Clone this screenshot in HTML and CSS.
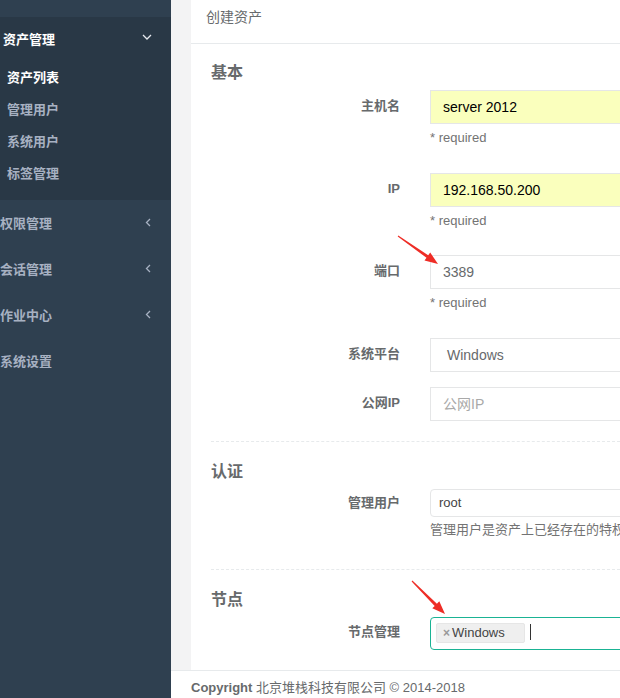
FILE: index.html
```html
<!DOCTYPE html>
<html lang="zh-CN">
<head>
<meta charset="utf-8">
<title>创建资产</title>
<link rel="stylesheet" href="styles.css">
</head>
<body>
<div class="layout">
  <nav class="sidebar">
    <div class="nav-top"></div>
    <div class="nav-active">
      <div class="nav-link nav-link-open">
        <span>资产管理</span>
        <svg class="chev chev-down" width="10" height="6" viewBox="0 0 10 6"><polyline points="1,1 5,5 9,1" fill="none" stroke="#e6e9ee" stroke-width="1.3"/></svg>
      </div>
      <ul class="subnav">
        <li class="current">资产列表</li>
        <li>管理用户</li>
        <li>系统用户</li>
        <li>标签管理</li>
      </ul>
    </div>
    <div class="nav-link">
      <span>权限管理</span>
      <svg class="chev chev-left" width="6" height="9" viewBox="0 0 6 9"><polyline points="5,1 1.5,4.5 5,8" fill="none" stroke="#a7b1c2" stroke-width="1.3"/></svg>
    </div>
    <div class="nav-link">
      <span>会话管理</span>
      <svg class="chev chev-left" width="6" height="9" viewBox="0 0 6 9"><polyline points="5,1 1.5,4.5 5,8" fill="none" stroke="#a7b1c2" stroke-width="1.3"/></svg>
    </div>
    <div class="nav-link">
      <span>作业中心</span>
      <svg class="chev chev-left" width="6" height="9" viewBox="0 0 6 9"><polyline points="5,1 1.5,4.5 5,8" fill="none" stroke="#a7b1c2" stroke-width="1.3"/></svg>
    </div>
    <div class="nav-link">
      <span>系统设置</span>
    </div>
  </nav>

  <div class="main">
    <div class="content">
      <div class="card">
        <div class="card-header">创建资产</div>
        <div class="card-body">
          <h3 class="section-title first">基本</h3>
          <div class="form-group">
            <div class="label">主机名</div>
            <div class="field">
              <div class="input autofill">server 2012</div>
              <div class="help">* required</div>
            </div>
          </div>
          <div class="form-group">
            <div class="label">IP</div>
            <div class="field">
              <div class="input autofill">192.168.50.200</div>
              <div class="help">* required</div>
            </div>
          </div>
          <div class="form-group">
            <div class="label">端口</div>
            <div class="field">
              <div class="input muted">3389</div>
              <div class="help">* required</div>
            </div>
          </div>
          <div class="form-group">
            <div class="label">系统平台</div>
            <div class="field">
              <div class="input select muted">Windows</div>
            </div>
          </div>
          <div class="form-group">
            <div class="label">公网IP</div>
            <div class="field">
              <div class="input placeholder">公网IP</div>
            </div>
          </div>

          <div class="hr-dashed"></div>

          <h3 class="section-title">认证</h3>
          <div class="form-group">
            <div class="label label-small">管理用户</div>
            <div class="field">
              <div class="select2">root</div>
              <div class="help help-long">管理用户是资产上已经存在的特权用户，用于推送系统用户</div>
            </div>
          </div>

          <div class="hr-dashed"></div>

          <h3 class="section-title">节点</h3>
          <div class="form-group">
            <div class="label label-multi">节点管理</div>
            <div class="field">
              <div class="select2-multi">
                <span class="tag"><span class="tag-x">×</span>Windows</span>
                <span class="caret"></span>
              </div>
            </div>
          </div>
        </div>
      </div>
    </div>
    <footer class="footer"><strong>Copyright</strong> 北京堆栈科技有限公司 © 2014-2018</footer>
  </div>
</div>

<svg class="annotations" width="620" height="698" viewBox="0 0 620 698">
  <polygon points="397.7,236.4 426.5,257.8 424.5,260.6 438,264 430.2,252.5 428.2,255.3 398.3,235.6" fill="#ee2d26"/>
  <polygon points="411.6,581.4 434.7,605.9 432.3,608.3 445,614 439.3,601.3 436.9,603.7 412.4,580.6" fill="#ee2d26"/>
</svg>
</body>
</html>
```

FILE: styles.css
```css
* { box-sizing: border-box; }

html, body {
  margin: 0;
  padding: 0;
  width: 620px;
  height: 698px;
  overflow: hidden;
}

body {
  font-family: "Liberation Sans", Arial, "Noto Sans CJK SC", sans-serif;
  font-size: 13px;
  color: #676a6c;
  background: #f3f3f4;
  position: relative;
}

.layout {
  display: flex;
  height: 698px;
}

/* Sidebar */
.sidebar {
  width: 171px;
  flex: 0 0 171px;
  background: #2f4050;
  font-family: "Noto Sans CJK SC", "Liberation Sans", sans-serif;
  font-weight: 700;
  font-size: 13px;
}

.nav-top {
  height: 17px;
}

.nav-active {
  background: #293846;
  padding-bottom: 11px;
}

.nav-link {
  display: flex;
  justify-content: space-between;
  align-items: center;
  height: 46px;
  line-height: 18px;
  padding: 0 19px 0 0;
  color: #a7b1c2;
}

.nav-link-open {
  height: 44px;
  padding-left: 3px;
  padding-top: 0;
  color: #ffffff;
}

.nav-link-open span {
  margin-top: 0;
}

.chev-down {
  margin-top: -4px;
  margin-right: 0;
}

.chev-left {
  margin-top: -2px;
  margin-right: 1px;
}

.subnav {
  list-style: none;
  margin: 0;
  padding: 0;
}

.subnav li {
  height: 32px;
  line-height: 18px;
  padding: 7px 0 7px 7px;
  color: #a7b1c2;
}

.subnav li.current {
  color: #ffffff;
}

/* Main */
.main {
  flex: 1;
  display: flex;
  flex-direction: column;
  min-width: 0;
}

.content {
  flex: 1;
  padding-left: 20px;
  overflow: hidden;
  min-height: 0;
}

.card {
  background: #ffffff;
  height: 100%;
  overflow: hidden;
}

.card-header {
  height: 44px;
  border-bottom: 1px solid #e7eaec;
  padding: 6px 0 0 15px;
  line-height: 20px;
  font-size: 14px;
  font-family: "Noto Sans CJK SC", sans-serif;
  color: #676a6c;
}

.card-body {
  padding: 0 0 0 20px;
}

.section-title {
  margin: 18px 0 9px;
  font-size: 16px;
  line-height: 20px;
  font-weight: 700;
  font-family: "Noto Sans CJK SC", sans-serif;
  color: #676a6c;
}

.section-title.first {
  margin-top: 17px;
}

.form-group {
  display: flex;
  align-items: flex-start;
  margin-bottom: 15px;
}

.form-group:last-of-type,
.form-group:has(+ .hr-dashed) {
  margin-bottom: 0;
}

.label {
  width: 189px;
  flex: 0 0 189px;
  text-align: right;
  padding-top: 7px;
  line-height: 18.5px;
  font-weight: 700;
  font-family: "Liberation Sans", "Noto Sans CJK SC", sans-serif;
  color: #676a6c;
}

.label-small {
  padding-top: 5px;
}

.label-multi {
  padding-top: 6px;
}

.field {
  flex: 1;
  margin-left: 30px;
  margin-right: -20px;
  min-width: 0;
}

.input {
  height: 34px;
  border: 1px solid #e5e6e7;
  padding: 0 12px;
  line-height: 32px;
  font-size: 14px;
  color: #000;
  white-space: nowrap;
}

.input.autofill {
  background: #faffbd;
}

.input.muted {
  color: #676a6c;
}

.input.select {
  padding-left: 16px;
}

.input.placeholder {
  color: #a9a9a9;
  font-family: "Liberation Sans", "Noto Sans CJK SC", sans-serif;
}

.help {
  margin: 5px 0 10px;
  line-height: 18.5px;
  color: #737373;
  white-space: nowrap;
}

.help-long {
  margin-top: 4px;
  font-family: "Liberation Sans", "Noto Sans CJK SC", sans-serif;
}

.hr-dashed {
  height: 1px;
  border-top: 1px dashed #e7eaec;
  margin: 20px 0 0;
}

.select2 {
  height: 28px;
  border: 1px solid #e5e6e7;
  border-radius: 4px;
  padding: 0 8px;
  line-height: 26px;
  color: #444;
}

.select2-multi {
  height: 33px;
  border: 1px solid #1ab394;
  border-radius: 4px;
  padding: 5px 5px;
  display: flex;
  align-items: flex-start;
}

.tag {
  display: inline-flex;
  align-items: center;
  height: 20px;
  width: 89px;
  background: #efefef;
  border: 1px solid #e6e6e6;
  border-radius: 2px;
  padding-left: 6px;
  color: #444;
  font-size: 13px;
  line-height: 18px;
}

.tag-x {
  color: #999;
  font-weight: 700;
  font-size: 12px;
  margin-right: 2px;
}

.caret {
  display: block;
  width: 1px;
  height: 16px;
  margin: 1px 0 0 5px;
  background: #333;
}

.footer {
  height: 28px;
  background: #ffffff;
  border-top: 1px solid #e7eaec;
  padding: 0 0 0 20px;
  line-height: 18px;
  padding-top: 8px;
  color: #676a6c;
  white-space: nowrap;
  font-family: "Liberation Sans", "Noto Sans CJK SC", sans-serif;
}

.footer strong {
  font-weight: 700;
}

.annotations {
  position: absolute;
  left: 0;
  top: 0;
  pointer-events: none;
}
```
